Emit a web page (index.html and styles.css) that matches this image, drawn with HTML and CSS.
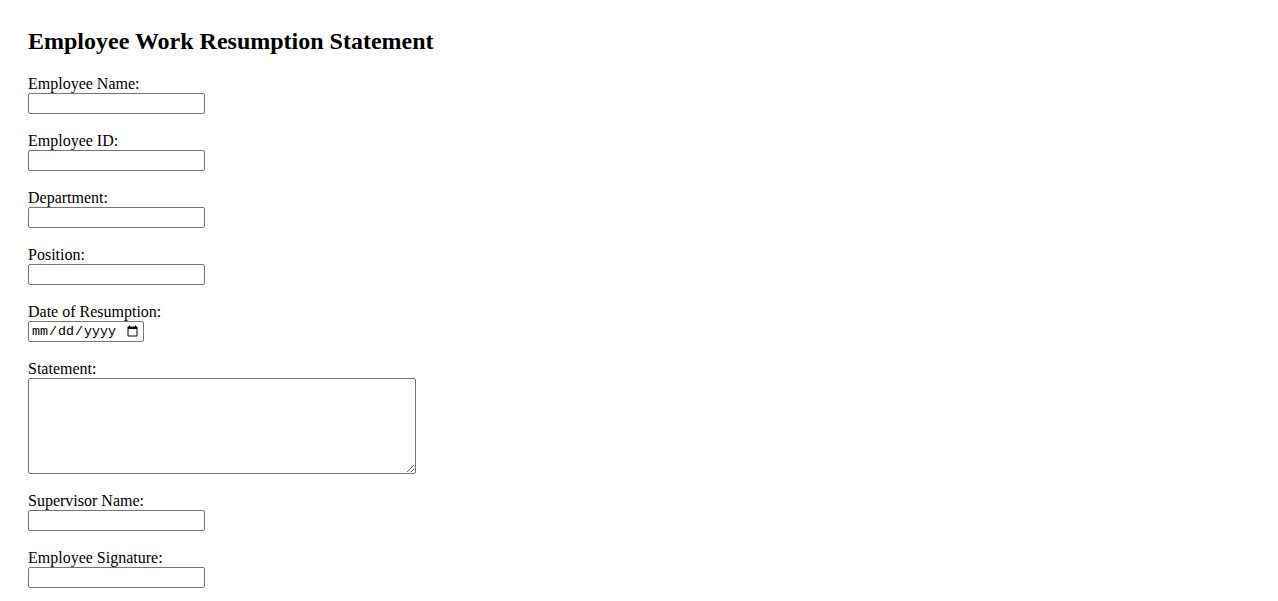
FILE: index.html
```html
<!DOCTYPE html>
<html lang="en">
<head>
<meta charset="utf-8">
<title>Employee Work Resumption Statement</title>
<link rel="stylesheet" href="styles.css">
</head>
<body>
<div class="page">
  <h2 class="title">Employee Work Resumption Statement</h2>
  <form class="form">
    <div class="field">
      <label for="name">Employee Name:</label>
      <input class="text" type="text" id="name">
    </div>
    <div class="field">
      <label for="eid">Employee ID:</label>
      <input class="text" type="text" id="eid">
    </div>
    <div class="field">
      <label for="dept">Department:</label>
      <input class="text" type="text" id="dept">
    </div>
    <div class="field">
      <label for="pos">Position:</label>
      <input class="text" type="text" id="pos">
    </div>
    <div class="field">
      <label for="date">Date of Resumption:</label>
      <input class="date" type="date" id="date">
    </div>
    <div class="field">
      <label for="stmt">Statement:</label>
      <textarea class="area" id="stmt"></textarea>
    </div>
    <div class="field">
      <label for="sup">Supervisor Name:</label>
      <input class="text" type="text" id="sup">
    </div>
    <div class="field">
      <label for="sig">Employee Signature:</label>
      <input class="text" type="text" id="sig">
    </div>
  </form>
</div>
</body>
</html>
```

FILE: styles.css
```css
html, body {
  margin: 0;
  padding: 0;
  background: #fff;
}
body {
  font-family: "Liberation Serif", "Times New Roman", serif;
  font-size: 16px;
  color: #000;
}
.page {
  padding: 28px 28px 0 28px;
}
.title {
  margin: 0 0 19.92px 0;
  font-size: 24px;
  font-weight: bold;
  line-height: normal;
}
.form {
  display: flex;
  flex-direction: column;
  align-items: flex-start;
}
.field {
  display: flex;
  flex-direction: column;
  align-items: flex-start;
  margin-bottom: 18px;
}
.field label {
  line-height: 18px;
}
.text, .date, .area {
  box-sizing: border-box;
  margin: 0;
  border: 1px solid #767676;
  border-radius: 2px;
  background: #fff;
  font-size: 13.33px;
}
.text {
  width: 177px;
  height: 21px;
  padding: 1px 2px;
  font-family: "Liberation Sans", Arial, sans-serif;
}
.date {
  width: 116px;
  height: 21px;
  padding: 1px 2px;
  font-family: "Liberation Mono", "Courier New", monospace;
}
.area {
  width: 388px;
  height: 96px;
  padding: 2px;
  font-family: "Liberation Mono", "Courier New", monospace;
}
```
